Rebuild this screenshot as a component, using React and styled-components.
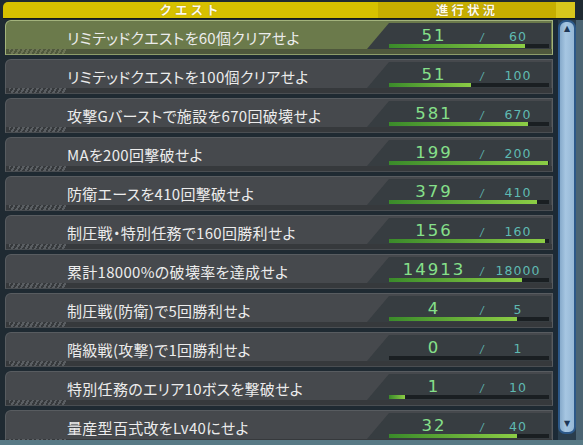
import styled, { createGlobalStyle } from 'styled-components'

const GlobalStyle = createGlobalStyle`
    body {
        margin: 0;
        background: #1f2a32;
    }
`

const quests = [
    { title: 'リミテッドクエストを60個クリアせよ', now: 51, goal: 60, active: true },
    { title: 'リミテッドクエストを100個クリアせよ', now: 51, goal: 100 },
    { title: '攻撃Gバーストで施設を670回破壊せよ', now: 581, goal: 670 },
    { title: 'MAを200回撃破せよ', now: 199, goal: 200 },
    { title: '防衛エースを410回撃破せよ', now: 379, goal: 410 },
    { title: '制圧戦・特別任務で160回勝利せよ', now: 156, goal: 160 },
    { title: '累計18000%の破壊率を達成せよ', now: 14913, goal: 18000 },
    { title: '制圧戦(防衛)で5回勝利せよ', now: 4, goal: 5 },
    { title: '階級戦(攻撃)で1回勝利せよ', now: 0, goal: 1 },
    { title: '特別任務のエリア10ボスを撃破せよ', now: 1, goal: 10 },
    { title: '量産型百式改をLv40にせよ', now: 32, goal: 40 },
]

const Frame = styled.div`
    width: 583px;
    height: 445px;
    display: flex;
    flex-direction: column;
    overflow: hidden;
    background: #1f2a32;
    font-family: "Noto Sans CJK JP", "Noto Sans", sans-serif;
`

const Header = styled.div`
    display: grid;
    grid-template-columns: 375px 178px 1fr;
    height: 16px;
    margin: 2px 8px 0 3px;
    border-bottom: 1px solid #141a1e;
`

const HeadCell = styled.div`
    display: flex;
    align-items: center;
    justify-content: center;
    height: 16px;
    border-radius: ${p => p.$tone ? '0' : '5px 0 0 0'};
    background: ${p => p.$tone === 'mid' ? '#c6ae00' : p.$tone === 'end' ? '#d9c61c' : '#d7c100'};
    color: #fffbe8;
    font-size: 12.5px;
    line-height: 16px;
    font-weight: 700;
    letter-spacing: 3px;
    text-shadow: 0 0 1px rgba(80, 60, 0, 0.6);
`

const Body = styled.div`
    flex: 1;
    display: flex;
    min-height: 0;
    padding-top: 1px;
`

const List = styled.div`
    width: 548px;
    margin-left: 5px;
    overflow: hidden;
`

const Row = styled.div`
    box-sizing: border-box;
    height: 35px;
    margin-bottom: 4px;
    display: flex;
    flex-direction: column;
    border: 1px solid ${p => p.$active ? '#a3b37c' : '#585c60'};
    border-bottom-color: ${p => p.$active ? '#8d9c6a' : '#4a4e52'};
    border-radius: 6px 0 0 0;
    background: ${p => p.$active ? '#6b7a4b' : '#46494d'};
`

const Main = styled.div`
    height: 28px;
    display: flex;
`

const Title = styled.div`
    flex: 1;
    display: flex;
    align-items: center;
    padding-left: 61px;
    padding-top: 4px;
    color: #ececec;
    font-size: 15px;
    font-feature-settings: "palt";
    letter-spacing: 0.3px;
    white-space: nowrap;
`

const Strip = styled.div`
    height: 5px;
    display: flex;
    background: ${p => p.$active ? '#4f583c' : '#36393c'};
`

const Hatch = styled.div`
    width: 57px;
    margin-left: 3px;
    background: repeating-linear-gradient(
        -60deg,
        transparent 0 2px,
        ${p => p.$active ? '#6d7555' : '#5a5e62'} 2px 4px
    );
`

const Panel = styled.div`
    box-sizing: border-box;
    width: 184px;
    height: 26px;
    margin: 2px 1px 0 0;
    padding: 5px 2px 0 22px;
    background: #373d41;
    clip-path: polygon(22px 0, 100% 0, 100% 100%, 0 100%);
    position: relative;
    z-index: 1;
`

const Numbers = styled.div`
    display: grid;
    grid-template-columns: 88px 10px 1fr;
    align-items: baseline;
    height: 15px;
    font-family: "DejaVu Sans", sans-serif;
`

const Now = styled.span`
    text-align: center;
    color: #86e08a;
    font-size: 16.5px;
    line-height: 15px;
    letter-spacing: 2px;
    padding-left: 2px;
`

const Slash = styled.span`
    text-align: center;
    color: #5fb7b0;
    font-size: 10px;
    font-style: italic;
`

const Goal = styled.span`
    text-align: center;
    color: #5fbab2;
    font-size: 12.5px;
    letter-spacing: 1px;
`

const Bar = styled.div`
    height: 4px;
    margin-top: 1px;
    background: #1a1f22;
    overflow: hidden;
`

const Fill = styled.div`
    height: 100%;
    background: linear-gradient(90deg, #3a8a2a, #8ccd45);
`

const ScrollCol = styled.div`
    width: 30px;
    display: flex;
    background: linear-gradient(90deg, #1c2a36 0 5px, #2a3d4c 5px 23px, #4b6473 23px);
`

const Thumb = styled.div`
    box-sizing: border-box;
    width: 18px;
    height: 414px;
    margin-left: 5px;
    display: flex;
    flex-direction: column;
    justify-content: space-between;
    align-items: center;
    border: 2px solid #2c5888;
    border-radius: 8px 8px 7px 7px;
    background: linear-gradient(90deg, #86aacb, #a6c6e2 40%, #96b8d6);
    color: #1d3656;
    font-size: 8px;
    line-height: 10px;
    padding: 2px 0 3px;
`

const Arrow = styled.span`
    font-family: "DejaVu Sans", sans-serif;
`

const BottomBar = styled.div`
    height: 5px;
    background: #587a86;
`

function QuestRow({ title, now, goal, active }) {
    return (
        <Row $active={active}>
            <Main>
                <Title>{title}</Title>
                <Panel>
                    <Numbers>
                        <Now>{now}</Now>
                        <Slash>/</Slash>
                        <Goal>{goal}</Goal>
                    </Numbers>
                    <Bar>
                        <Fill style={{ width: `${(now / goal) * 100}%` }} />
                    </Bar>
                </Panel>
            </Main>
            <Strip $active={active}>
                <Hatch $active={active} />
            </Strip>
        </Row>
    )
}

export default function App() {
    return (
        <>
            <GlobalStyle />
            <Frame>
                <Header>
                    <HeadCell>クエスト</HeadCell>
                    <HeadCell $tone="mid">進行状況</HeadCell>
                    <HeadCell $tone="end" />
                </Header>
                <Body>
                    <List>
                        {quests.map(q => <QuestRow key={q.title} {...q} />)}
                    </List>
                    <ScrollCol>
                        <Thumb>
                            <Arrow>▲</Arrow>
                            <Arrow>▼</Arrow>
                        </Thumb>
                    </ScrollCol>
                </Body>
                <BottomBar />
            </Frame>
        </>
    )
}
